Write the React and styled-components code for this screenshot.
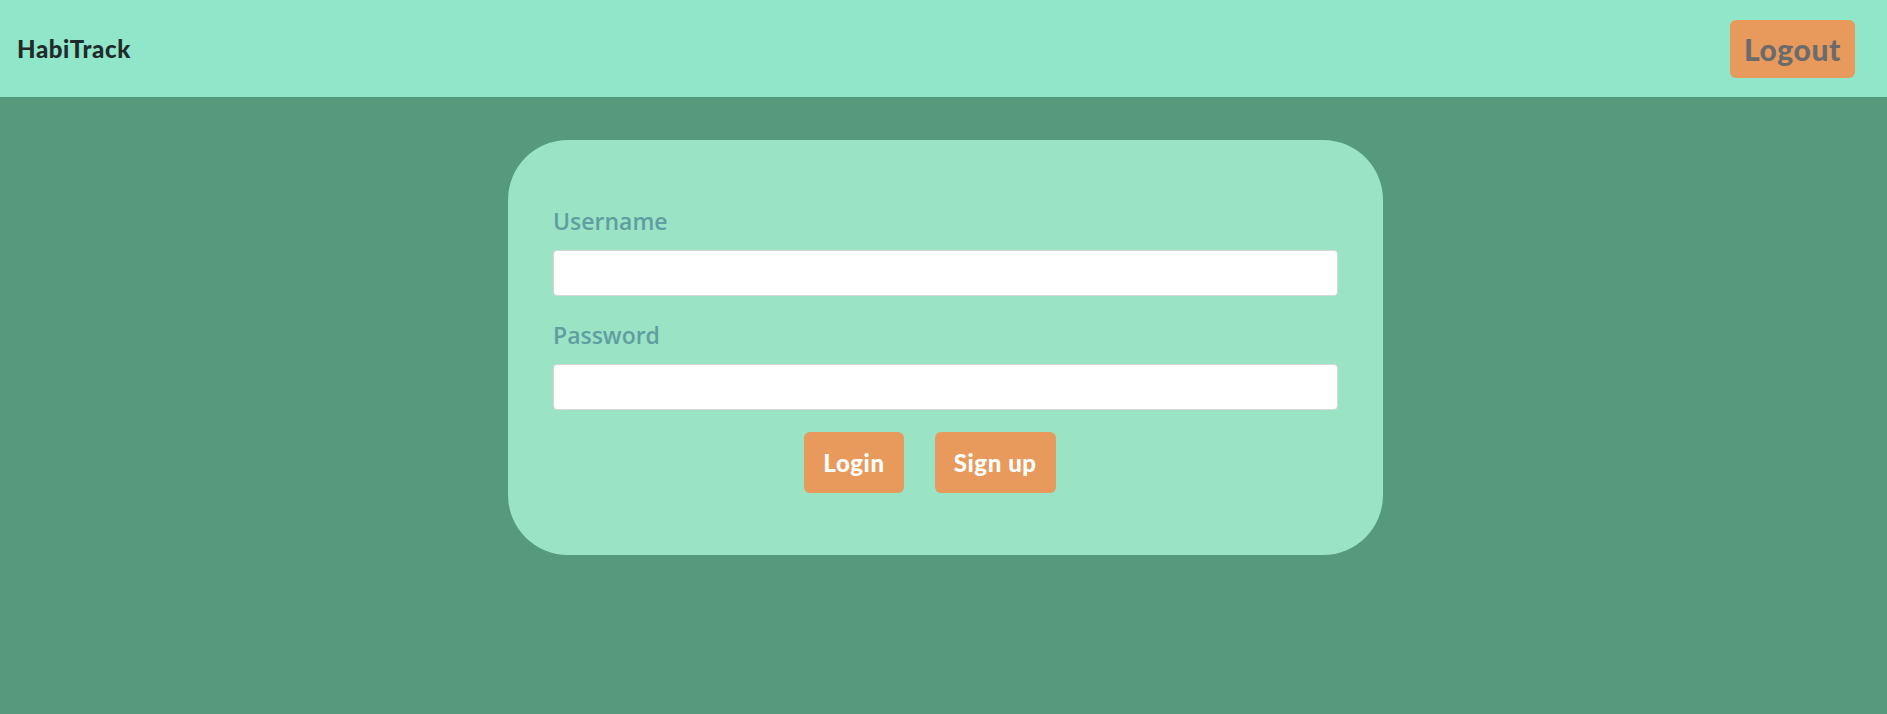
import React from 'react'
import styled, { createGlobalStyle } from 'styled-components'

const GlobalStyle = createGlobalStyle`
  html, body {
    margin: 0;
    padding: 0;
    background: #569a7e;
  }
  body {
    font-family: Lato, "Open Sans", sans-serif;
    min-height: 714px;
  }
`

const Header = styled.header`
  height: 97px;
  background: #90e6c9;
  display: flex;
  align-items: center;
  justify-content: space-between;
  padding: 0 32px 0 17px;
  box-sizing: border-box;
`

const Logo = styled.h1`
  margin: 0;
  font-family: Lato, sans-serif;
  font-weight: 900;
  font-size: 24px;
  color: #1f2a2a;
  letter-spacing: 0.6px;
`

const Button = styled.button`
  border: none;
  border-radius: 6px;
  background: #e89a5c;
  font-family: Lato, sans-serif;
  font-weight: 900;
  cursor: pointer;
  letter-spacing: 0.6px;
  color: ${p => (p.$muted ? '#6b6b6b' : '#ffffff')};
  font-size: ${p => (p.$large ? '30px' : '24px')};
  height: ${p => (p.$large ? '58px' : '61px')};
  padding: 0 ${p => (p.$large ? '14px' : '19px')};
`

const Main = styled.main`
  display: flex;
  justify-content: center;
  padding: 43px 0 0 4px;
`

const Card = styled.form`
  width: 875px;
  box-sizing: border-box;
  background: #9ae3c5;
  border-radius: 60px;
  padding: 67px 45px 62px;
`

const Label = styled.label`
  display: block;
  font-family: "Open Sans", sans-serif;
  font-weight: 600;
  font-size: 23px;
  line-height: 28px;
  color: #5f9ea0;
  margin-bottom: 15px;
`

const Input = styled.input`
  display: block;
  width: 100%;
  box-sizing: border-box;
  height: 46px;
  border: 1px solid #d6d6d6;
  border-radius: 4px;
  background: #fff;
  margin-bottom: ${p => p.$mb || '25px'};
`

const Actions = styled.div`
  display: flex;
  justify-content: center;
  button {
    margin-right: 31px;
  }
`

export default function App() {
  return (
    <>
      <GlobalStyle />
      <Header>
        <Logo>HabiTrack</Logo>
        <Button $large $muted>Logout</Button>
      </Header>
      <Main>
        <Card onSubmit={e => e.preventDefault()}>
          <Label htmlFor='username'>Username</Label>
          <Input id='username' type='text' />
          <Label htmlFor='password'>Password</Label>
          <Input id='password' type='password' $mb='22px' />
          <Actions>
            <Button type='submit'>Login</Button>
            <Button type='button'>Sign up</Button>
          </Actions>
        </Card>
      </Main>
    </>
  )
}
